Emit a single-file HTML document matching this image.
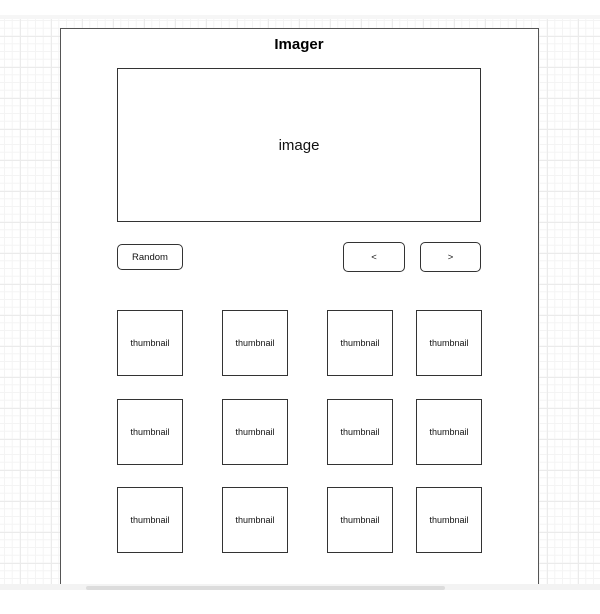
<!DOCTYPE html>
<html><head><style>
body{margin:0;width:600px;height:614px;background:#fff;position:relative;overflow:hidden;font-family:"Liberation Sans",Arial,sans-serif;}
.grid{position:absolute;left:0;top:19px;width:600px;height:565px;background-color:#fff;
background-image:linear-gradient(#ebebeb 1px,transparent 1px),linear-gradient(90deg,#ebebeb 1px,transparent 1px),linear-gradient(#f4f4f4 1px,transparent 1px),linear-gradient(90deg,#f4f4f4 1px,transparent 1px);
background-size:31px 31px,31px 31px,7.75px 7.75px,7.75px 7.75px;background-position:-11px 17px,20px 0,-11px 1px,4px 0;}
.top{position:absolute;left:0;top:15px;width:600px;height:4px;background:#f6f6f6}
.frame{position:absolute;left:60px;top:28px;width:477px;height:556px;border:1px solid #555;border-bottom:none;background:#fff;}
.b{position:absolute;border:1px solid #333;background:#fff;display:flex;align-items:center;justify-content:center;color:#111;box-sizing:border-box;}
.t{width:66px;height:66px;font-size:9px;}
.btn{border-radius:5px;font-size:9.5px;}
.bot{position:absolute;left:0;top:584px;width:600px;height:6px;background:#f3f3f3}
.sb{position:absolute;left:86px;top:586px;width:359px;height:4px;background:#dcdcdc;border-radius:2px}
</style></head><body>
<div class="top"></div>
<div class="grid"></div>
<div class="frame"></div>
<div style="position:absolute;left:0;width:598px;top:36px;text-align:center;font-weight:bold;font-size:15px;color:#000">Imager</div>
<div class="b" style="left:117px;top:68px;width:364px;height:154px;font-size:15px">image</div>
<div class="b btn" style="left:117px;top:244px;width:66px;height:26px">Random</div>
<div class="b btn" style="left:343px;top:242px;width:62px;height:30px">&lt;</div>
<div class="b btn" style="left:420px;top:242px;width:61px;height:30px">&gt;</div>
<div class="b t" style="left:117px;top:310px">thumbnail</div>
<div class="b t" style="left:222px;top:310px">thumbnail</div>
<div class="b t" style="left:327px;top:310px">thumbnail</div>
<div class="b t" style="left:416px;top:310px">thumbnail</div>
<div class="b t" style="left:117px;top:399px">thumbnail</div>
<div class="b t" style="left:222px;top:399px">thumbnail</div>
<div class="b t" style="left:327px;top:399px">thumbnail</div>
<div class="b t" style="left:416px;top:399px">thumbnail</div>
<div class="b t" style="left:117px;top:487px">thumbnail</div>
<div class="b t" style="left:222px;top:487px">thumbnail</div>
<div class="b t" style="left:327px;top:487px">thumbnail</div>
<div class="b t" style="left:416px;top:487px">thumbnail</div>
<div class="bot"></div>
<div class="sb"></div>
</body></html>
